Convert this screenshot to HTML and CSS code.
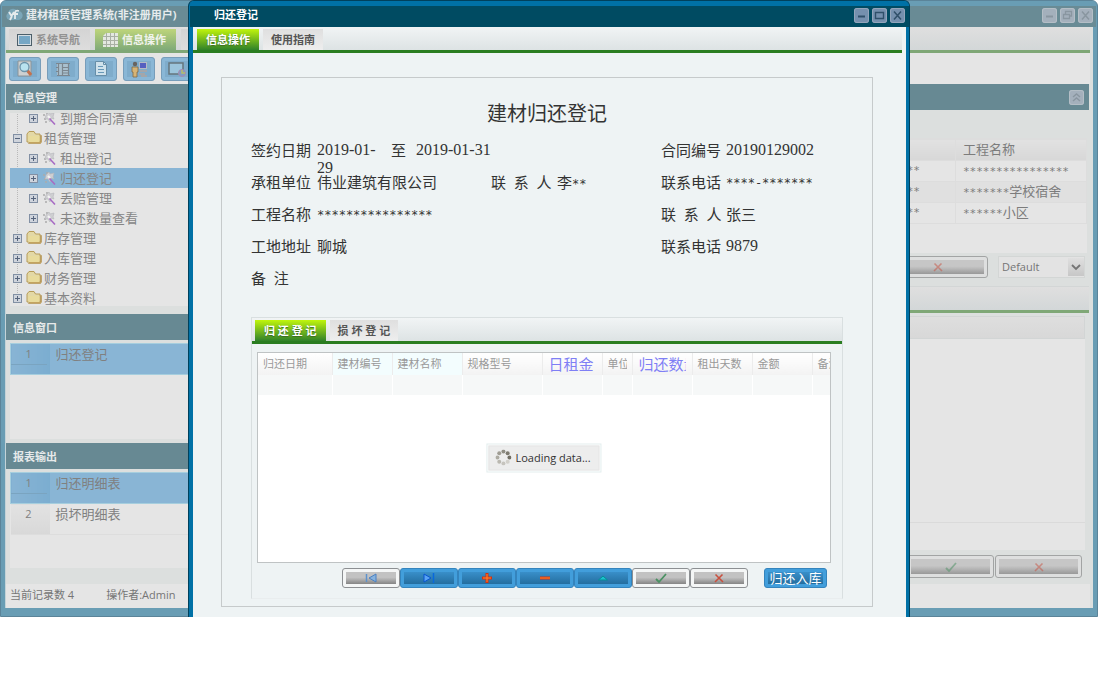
FILE: index.html
```html
<!DOCTYPE html>
<html lang="zh-CN">

<head>
    <meta charset="UTF-8">
    <meta name="viewport" content="width=device-width, initial-scale=1.0">
    <title>建材租赁管理系统</title>
    <link rel="stylesheet" href="styles.css">
</head>

<body>

    <!-- shared icons -->
    <svg class="defs" width="0" height="0" aria-hidden="true">
        <symbol id="i-min" viewBox="0 0 15 15"><path d="M4 8.5h7" stroke="currentColor" stroke-width="2" /></symbol>
        <symbol id="i-max" viewBox="0 0 15 15"><path d="M3.5 4.5h8v6h-8zM3 4.5h9" fill="none" stroke="currentColor" stroke-width="1.4" /></symbol>
        <symbol id="i-restore" viewBox="0 0 15 15"><path d="M5.500 6V3.500h6v4.500H9M3.500 6.500h6v4h-6z" fill="none" stroke="currentColor" stroke-width="1.3" /></symbol>
        <symbol id="i-close" viewBox="0 0 15 15"><path d="M4 3.500l7 8M11 3.500l-7 8" stroke="currentColor" stroke-width="1.5" /></symbol>
        <symbol id="i-up2" viewBox="0 0 15 15"><path d="M4 7l3.500-3L11 7M4 11l3.500-3 3.500 3" fill="none" stroke="currentColor" stroke-width="1.4" /></symbol>
        <symbol id="i-plusbox" viewBox="0 0 9 9"><rect x=".5" y=".5" width="8" height="8" fill="#cfd4dc" stroke="#8290a4" /><path d="M2 4.500h5M4.500 2v5" stroke="#56647c" /></symbol>
        <symbol id="i-minusbox" viewBox="0 0 9 9"><rect x=".5" y=".5" width="8" height="8" fill="#cfd4dc" stroke="#8290a4" /><path d="M2 4.500h5" stroke="#56647c" /></symbol>
        <symbol id="i-folder" viewBox="0 0 16 14"><path d="M1 11V3l2-2.500h5L9.500 3H14v8z" fill="#e3d8a6" stroke="#b79c58" /><path d="M2.500 12.500h12l1-1.500V4.500h-1V11h-11z" fill="#cdb06c" stroke="#ac8c48" stroke-width=".6" /><path d="M2.500 5h11v6h-11z" fill="#e8db9c" /></symbol>
        <symbol id="i-wand" viewBox="0 0 14 14"><path d="M1 4h2M2 8h2M4 2h2M3 11h2" stroke="#aaa" stroke-width="1.4" /><path d="M4 4l3-3 1 2 4-1-1 4 1 2-3-1-1 4-2-3-3 0z" fill="#cfcfd2" stroke="#b4b5b9" stroke-width=".6" /><path d="M6 5l2 2" stroke="#f3f3f3" stroke-width="2" /><path d="M7.500 7.500l5.500 6" stroke="#a86cc4" stroke-width="1.6" /></symbol>
        <symbol id="i-cross" viewBox="0 0 12 12"><path d="M2.500 2.500l7.500 7.500M9.500 2.500L2 10" stroke="#c8503f" stroke-width="1.600" /></symbol>
        <symbol id="i-check" viewBox="0 0 12 12"><path d="M1 7l3 3 7-8" fill="none" stroke="#4a9162" stroke-width="1.800" /></symbol>
    </svg>

    <div class="desktop">

        <div class="window main-window">
            <div class="titlebar">
                <svg class="logo" viewBox="0 0 18 14"><path d="M4 12a4 4 0 0 1-1-7 5 5 0 0 1 9-2 4.500 4.500 0 0 1 2 9z" fill="#7ba6b8" /><path d="M4 4l2.500 4L9 4M7 8l-2 4M14 3c-3-1-4 0-4 3v5M8 6h5" fill="none" stroke="#e4eaec" stroke-width="1.8" /></svg>
                <span class="title-text">建材租赁管理系统(非注册用户)</span>
                <div class="win-buttons">
                    <button type="button" aria-label="最小化"><svg><use href="#i-min" /></svg></button>
                    <button type="button" aria-label="还原"><svg><use href="#i-restore" /></svg></button>
                    <button type="button" aria-label="关闭"><svg><use href="#i-close" /></svg></button>
                </div>
            </div>

            <div class="window-body">
                <div class="tabs main-tabs">
                    <button type="button" class="tab">
                        <svg class="tab-icon" viewBox="0 0 15 12"><rect x=".5" y=".5" width="14" height="11" fill="#d5dde2" stroke="#4c5f6a" /><rect x="2" y="2" width="11" height="8" fill="#76a7c5" /></svg>系统导航</button>
                    <button type="button" class="tab active">
                        <svg class="tab-icon" viewBox="0 0 15 14"><path d="M3 0h12v14H0V3z" fill="#e4e8e0" /><path d="M3.500 0v14M7.500 0v14M11.500 0v14M0 3.500h15M0 7.500h15M0 11.500h15" stroke="#a9b0a4" /></svg>信息操作</button>
                    <button type="button" class="tab" aria-label="其他"></button>
                </div>

                <div class="toolbar">
                    <button type="button" aria-label="查询"><svg viewBox="0 0 18 18"><path d="M2 1h13v15H2z" fill="#cdd0d1" stroke="#8b9499" /><path d="M11 10l4 5" stroke="#c4704c" stroke-width="3" /><circle cx="8.500" cy="7" r="4.500" fill="#b9e2ef" stroke="#6d94aa" stroke-width="1.300" /></svg></button>
                    <button type="button" aria-label="列表"><svg viewBox="0 0 18 18"><path d="M3 4h12v11H3z" fill="#a9c0cf" /><path d="M2 3.500h14M3 15.500h13M4.500 4v11M8.500 4v11M14.500 4v11M8 7.500h6M8 10.500h6M8 13h6M2 7.500h3M2 11.500h3" stroke="#7b868f" stroke-width="1.200" /></svg></button>
                    <button type="button" aria-label="文档"><svg viewBox="0 0 18 18"><path d="M3.500 1.500h8l3 3v11h-11z" fill="#cfe2ec" stroke="#668ea8" /><path d="M6 6.500h5M6 9.500h6M6 12.500h6" stroke="#6798b8" /><path d="M11.500 1.500v3h3" fill="none" stroke="#668ea8" /></svg></button>
                    <button type="button" aria-label="用户"><svg viewBox="0 0 18 18"><circle cx="5" cy="4" r="2.200" fill="#686460" /><path d="M2 7h6v5H7v5H3v-5H2z" fill="#d6b476" stroke="#816a48" stroke-width=".8" /><rect x="9.500" y="2.500" width="7" height="6" fill="#555fc0" stroke="#b6bac4" /><path d="M10 11h7M9 14h6M11 16h6" stroke="#a3a6aa" stroke-width="2" /></svg></button>
                    <button type="button" aria-label="窗口"><svg viewBox="0 0 18 18"><rect x="1" y="3" width="14" height="11" fill="#9cc5dc" stroke="#66757e" stroke-width="1.500" /><circle cx="14" cy="13" r="3.500" fill="#7f9cc5" stroke="#a78aae" /><path d="M14 10v3h3" stroke="#b8bd68" stroke-width="1.500" fill="none" /></svg></button>
                </div>

                <div class="workspace">
                    <div class="sidebar">
                        <h2 class="heading">信息管理</h2>
                        <div class="tree">
                            <ul>
                                <li class="leaf"><svg class="box"><use href="#i-plusbox" /></svg><svg class="wand"><use href="#i-wand" /></svg>到期合同清单</li>
                                <li><svg class="box"><use href="#i-minusbox" /></svg><svg class="folder"><use href="#i-folder" /></svg>租赁管理</li>
                                <li class="leaf"><svg class="box"><use href="#i-plusbox" /></svg><svg class="wand"><use href="#i-wand" /></svg>租出登记</li>
                                <li class="leaf selected"><svg class="box"><use href="#i-plusbox" /></svg><svg class="wand"><use href="#i-wand" /></svg>归还登记</li>
                                <li class="leaf"><svg class="box"><use href="#i-plusbox" /></svg><svg class="wand"><use href="#i-wand" /></svg>丢赔管理</li>
                                <li class="leaf"><svg class="box"><use href="#i-plusbox" /></svg><svg class="wand"><use href="#i-wand" /></svg>未还数量查看</li>
                                <li><svg class="box"><use href="#i-plusbox" /></svg><svg class="folder"><use href="#i-folder" /></svg>库存管理</li>
                                <li><svg class="box"><use href="#i-plusbox" /></svg><svg class="folder"><use href="#i-folder" /></svg>入库管理</li>
                                <li><svg class="box"><use href="#i-plusbox" /></svg><svg class="folder"><use href="#i-folder" /></svg>财务管理</li>
                                <li><svg class="box"><use href="#i-plusbox" /></svg><svg class="folder"><use href="#i-folder" /></svg>基本资料</li>
                            </ul>
                        </div>

                        <h2 class="heading">信息窗口</h2>
                        <div class="list">
                            <table>
                                <tr class="selected"><td class="no"><span>1</span></td><td>归还登记</td></tr>
                            </table>
                        </div>

                        <h2 class="heading">报表输出</h2>
                        <div class="list">
                            <table>
                                <tr class="selected"><td class="no"><span>1</span></td><td>归还明细表</td></tr>
                                <tr><td class="no"><span>2</span></td><td>损坏明细表</td></tr>
                            </table>
                        </div>
                    </div>

                    <div class="content">
                        <div class="heading content-heading">
                            <button type="button" class="collapse" aria-label="折叠"><svg><use href="#i-up2" /></svg></button>
                        </div>
                        <div class="project-box">
                            <table class="projects">
                                <tr><th></th><th class="name">工程名称</th></tr>
                                <tr><td class="masked">**</td><td class="name"><span class="stars">****************</span></td></tr>
                                <tr><td class="masked">**</td><td class="name"><span class="stars">*******</span>学校宿舍</td></tr>
                                <tr><td class="masked">**</td><td class="name"><span class="stars">******</span>小区</td></tr>
                            </table>
                        </div>
                        <div class="filter-row">
                            <button type="button" class="nav-btn wide" aria-label="取消"><svg><use href="#i-cross" /></svg></button>
                            <div class="select-box">
                                <select aria-label="视图">
                                    <option>Default</option>
                                </select>
                                <svg viewBox="0 0 16 18"><path d="M4 7l4 4 4-4" fill="none" stroke="#747474" stroke-width="1.800" /></svg>
                            </div>
                        </div>
                        <div class="tabs sub-strip"></div>
                        <div class="detail-box">
                            <div class="detail-head"></div>
                            <div class="detail-foot"></div>
                        </div>
                        <div class="action-row">
                            <button type="button" class="nav-btn" aria-label="确定"><svg><use href="#i-check" /></svg></button>
                            <button type="button" class="nav-btn" aria-label="取消"><svg><use href="#i-cross" /></svg></button>
                        </div>
                    </div>
                </div>

                <div class="statusbar"><span>当前记录数 4</span><span>操作者:Admin</span></div>
            </div>
        </div>

        <!-- return registration dialog -->
        <div class="window dialog">
            <div class="titlebar">
                <span class="title-text">归还登记</span>
                <div class="win-buttons">
                    <button type="button" aria-label="最小化"><svg><use href="#i-min" /></svg></button>
                    <button type="button" aria-label="最大化"><svg><use href="#i-max" /></svg></button>
                    <button type="button" aria-label="关闭"><svg><use href="#i-close" /></svg></button>
                </div>
            </div>

            <div class="window-body">
                <div class="tabs">
                    <button type="button" class="tab active">信息操作</button>
                    <button type="button" class="tab">使用指南</button>
                </div>

                <div class="card">
                    <h1>建材归还登记</h1>
                    <dl class="info">
                        <dt>签约日期</dt>
                        <dd class="period"><span class="num start">2019-01-29</span><span class="to">至</span><span class="num">2019-01-31</span></dd>
                        <dt>合同编号</dt>
                        <dd class="num">20190129002</dd>

                        <dt>承租单位</dt>
                        <dd>伟业建筑有限公司</dd>
                        <dt>联&nbsp;&nbsp;系&nbsp;&nbsp;人</dt>
                        <dd>李<span class="stars">**</span></dd>
                        <dt>联系电话</dt>
                        <dd class="stars">****-*******</dd>

                        <dt>工程名称</dt>
                        <dd class="long stars">****************</dd>
                        <dt>联&nbsp;&nbsp;系&nbsp;&nbsp;人</dt>
                        <dd>张三</dd>

                        <dt>工地地址</dt>
                        <dd class="long">聊城</dd>
                        <dt>联系电话</dt>
                        <dd class="num">9879</dd>

                        <dt>备&nbsp;&nbsp;注</dt>
                        <dd class="full"></dd>
                    </dl>

                    <div class="panel">
                        <div class="tabs">
                            <button type="button" class="tab active">归 还 登 记</button>
                            <button type="button" class="tab">损 坏 登 记</button>
                        </div>
                        <div class="grid-box">
                            <table class="grid">
                                <colgroup>
                                    <col class="w74"><col class="w60"><col class="w70"><col class="w80"><col class="w60">
                                    <col class="w30"><col class="w60"><col class="w60"><col class="w60"><col class="w60">
                                </colgroup>
                                <tr>
                                    <th>归还日期</th>
                                    <th class="tint">建材编号</th>
                                    <th class="tint">建材名称</th>
                                    <th>规格型号</th>
                                    <th class="key"><div>日租金</div></th>
                                    <th><div>单位</div></th>
                                    <th class="key"><div>归还数量</div></th>
                                    <th>租出天数</th>
                                    <th>金额</th>
                                    <th>备注</th>
                                </tr>
                                <tr>
                                    <td></td><td></td><td></td><td></td><td></td>
                                    <td></td><td></td><td></td><td></td><td></td>
                                </tr>
                            </table>
                            <div class="loading">
                                <div class="loading-inner">
                                    <svg viewBox="0 0 16 16">
                                        <circle cx="8" cy="2" r="2" fill="#8f8d84" /><circle cx="12.200" cy="3.800" r="2" fill="#7d7a70" />
                                        <circle cx="14" cy="8" r="2" fill="#716e64" /><circle cx="12.200" cy="12.200" r="2" fill="#d2d0ca" />
                                        <circle cx="8" cy="14" r="2" fill="#c6c4be" /><circle cx="3.800" cy="12.200" r="2" fill="#bab8b0" />
                                        <circle cx="2" cy="8" r="2" fill="#adaba2" /><circle cx="3.800" cy="3.800" r="2" fill="#9f9c93" />
                                    </svg>Loading data...
                                </div>
                            </div>
                        </div>
                        <div class="nav-row">
                            <button type="button" class="nav-btn" aria-label="首条"><svg viewBox="0 0 12 12"><path d="M1.500 2v8" stroke="#5d92cc" stroke-width="1.500" /><path d="M11 2v8L4 6z" fill="#86b2de" stroke="#4a80c2" /></svg></button>
                            <button type="button" class="nav-btn blue" aria-label="末条"><svg viewBox="0 0 12 12"><path d="M10.500 1v10" stroke="#0869dd" stroke-width="1.500" /><path d="M1 2v8l7-4z" fill="#58a3f5" stroke="#0754d0" /></svg></button>
                            <button type="button" class="nav-btn blue" aria-label="新增"><svg viewBox="0 0 12 12"><path d="M6 1v10M1 6h10" stroke="#d8300c" stroke-width="3" /><path d="M6 2v8M2 6h8" stroke="#ff8a30" stroke-width="1" /></svg></button>
                            <button type="button" class="nav-btn blue" aria-label="删除"><svg viewBox="0 0 12 12"><path d="M1 6h10" stroke="#d8300c" stroke-width="3" /><path d="M1 6h10" stroke="#ff8a30" stroke-width="1" /></svg></button>
                            <button type="button" class="nav-btn blue" aria-label="编辑"><svg viewBox="0 0 12 12"><path d="M1.500 8h9L6 4z" fill="#1bc1cc" stroke="#078a95" /></svg></button>
                            <button type="button" class="nav-btn" aria-label="确定"><svg><use href="#i-check" /></svg></button>
                            <button type="button" class="nav-btn" aria-label="取消"><svg><use href="#i-cross" /></svg></button>
                            <button type="button" class="nav-btn blue store">归还入库</button>
                        </div>
                    </div>
                </div>
            </div>
        </div>

    </div>

</body>

</html>
```
FILE: styles.css
```css
* {
    box-sizing: border-box;
    margin: 0;
    padding: 0;
}

body {
    background-color: #fff;
    font-family: "Open Sans", "Noto Sans CJK SC", sans-serif;
    font-size: 11px;
    line-height: 16px;
}

button {
    font: inherit;
    border: none;
    cursor: pointer;
}

table {
    border-collapse: collapse;
    table-layout: fixed;
    width: 100%;
}

ul {
    list-style: none;
}

.defs {
    position: absolute;
}

.desktop {
    position: relative;
}

/* windows */
.window {
    overflow: hidden;
    border-radius: 6px 6px 0 0;
}

.main-window {
    padding: 0 4px 4px;
    background-color: #699db4;
    border: 1px solid #5b8499;
}

.dialog {
    position: absolute;
    top: 0;
    left: 188px;
    right: 188px;
    padding: 0 3px 0 4px;
    background-color: #0071a6;
    border: 1px solid #00415c;
    border-bottom: none;
}

.titlebar {
    display: flex;
    align-items: center;
    height: 26px;
    padding: 2px 4px 0;
    margin: 0 -3px;
    color: #fff;
    font-weight: bold;
    background: linear-gradient(#0071a6 5px, #004b62 5px);
}

.main-window .titlebar {
    padding: 2px 3px 0;
    color: #e6ebed;
    background: linear-gradient(#699db4 5px, #698b95 5px);
}

.dialog .title-text {
    margin-left: 20px;
}

.logo {
    width: 18px;
    height: 14px;
    margin-right: 3px;
}

.win-buttons {
    display: flex;
    gap: 3px;
    margin-left: auto;
}

.win-buttons button,
.collapse {
    width: 15px;
    height: 15px;
    border-radius: 3px;
    color: #30506a;
    background-color: #7590ae;
    box-shadow: inset 0 0 0 1px #93a5bb;
}

.main-window .win-buttons button,
.collapse {
    color: #8996a0;
    background-color: #a4b0bc;
    box-shadow: inset 0 0 0 1px #b4bec6;
}

.win-buttons svg,
.collapse svg {
    display: block;
    width: 15px;
    height: 15px;
}

.window-body {
    background-color: #eef3f4;
}

.main-window .window-body {
    background-color: #dcdfde;
    border-left: 1px solid #c3d3d8;
    padding-right: 3px;
}

/* tabs */
.tabs {
    display: flex;
    align-items: flex-end;
    gap: 4px;
    height: 26px;
    padding: 0 4px;
    background: linear-gradient(#f1f4f5, #dde3e4);
    border-bottom: 3px solid #2a7d20;
}

.tab {
    height: 21px;
    padding: 1px 8px 0;
    color: #555;
    font-weight: bold;
    background: linear-gradient(#dfdfdf, #eeeeee);
}

.tab.active {
    padding: 1px 9px 0;
    color: #fff;
    background: linear-gradient(#c0f50d, #2f8129);
    text-shadow: 0 1px 1px #3a6b20;
}

.dialog .window-body > .tabs {
    margin-right: 4px;
}

.main-window .tabs {
    gap: 5px;
    padding: 0 3px;
    background: linear-gradient(#dfdfdf, #d3d7d8);
    border-bottom-color: #7fa776;
}

.main-window .tab {
    display: flex;
    align-items: center;
    gap: 4px;
    min-width: 81px;
    color: #929292;
    background: linear-gradient(#d4d4d4, #dddddd);
}

.main-window .tab.active {
    padding: 1px 8px 0;
    color: #f0f3ec;
    background: linear-gradient(#bed57b, #7faa78);
    text-shadow: none;
}

.tab-icon {
    width: 15px;
    height: 14px;
}

.toolbar {
    display: flex;
    gap: 6px;
    height: 31px;
    padding: 4px 3px 3px;
    background-color: #e5e5e5;
}

.toolbar button {
    width: 32px;
    height: 24px;
    border: 1px solid #779dba;
    border-radius: 3px;
    background-color: #7faccb;
    box-shadow: inset 0 0 0 3px #8ab7d6;
}

.toolbar svg {
    display: block;
    width: 18px;
    height: 18px;
    margin: 0 auto;
}

/* main window panes */
.workspace {
    display: grid;
    grid-template-columns: 240px 1fr;
}

.heading {
    height: 26px;
    padding: 0 7px;
    color: #e6e9ea;
    font-size: 11px;
    line-height: 28px;
    background-color: #678993;
}

.tree {
    height: 193px;
    margin: 3px 0 8px 4px;
    overflow: hidden;
    background-color: #e5e5e5;
}

.tree ul {
    margin-top: -5px;
    background: repeating-linear-gradient(#b9b9b9 0 1px, transparent 1px 2px) 7px 0 / 1px 190px no-repeat;
}

.tree li {
    display: flex;
    align-items: center;
    height: 20px;
    padding-left: 3px;
    color: #858585;
    font-size: 13px;
    line-height: 18px;
}

.tree .leaf {
    padding-left: 19px;
}

.tree .selected {
    background-color: #89b5d5;
}

.box {
    width: 9px;
    height: 9px;
    margin-right: 4px;
}

.folder {
    width: 16px;
    height: 14px;
    margin-right: 2px;
}

.wand {
    width: 14px;
    height: 14px;
    margin-right: 4px;
}

.list {
    height: 96px;
    margin: 3px 0 4px 4px;
    background-color: #e5e5e5;
}

.list tr {
    height: 31px;
    border-bottom: 1px solid #dddddd;
}

.list td {
    padding-left: 6px;
    color: #808080;
    font-size: 13px;
    line-height: 20px;
    vertical-align: top;
}

.list .no {
    width: 39px;
    padding: 0 3px 0 0;
    font-size: 11px;
    text-align: center;
    background: linear-gradient(#e2e2e2, #d8d8d8);
}

.list .selected {
    background-color: #89b5d5;
    border: 1px solid #a6cede;
}

.list .selected .no {
    background: linear-gradient(to right, #88b4d4, #7badd0);
}

.no span {
    display: block;
}

.selected .no span {
    border-bottom: 1px solid #7aa4c0;
}

.statusbar {
    display: flex;
    gap: 32px;
    height: 24px;
    margin-bottom: 4px;
    padding: 3px 4px;
    color: #757575;
    background-color: #e5e5e5;
}

.content {
    display: flex;
    flex-direction: column;
    padding-right: 1px;
}

.content-heading {
    display: flex;
    align-items: center;
    justify-content: flex-end;
    padding: 0 5px;
}

.project-box {
    height: 115px;
    margin: 28px 2px 3px 0;
    background-color: #e5e5e5;
}

.projects th,
.projects td {
    height: 21px;
    color: #7c7c7c;
    font-size: 13px;
    font-weight: normal;
    line-height: 18px;
    text-align: left;
    border: 1px solid #dddddd;
}

.projects th {
    height: 22px;
    padding-bottom: 2px;
    background: linear-gradient(#e2e2e2, #d7d7d7);
}

.projects .name {
    width: 131px;
    padding-left: 7px;
}

.projects tr:nth-child(odd) td {
    background-color: #e0e0e0;
}

.stars,
.projects .masked {
    font-family: "DejaVu Sans Mono", monospace;
    font-size: 12px;
}

.projects .stars,
.projects .masked {
    font-size: 11px;
}

.projects .masked {
    padding-right: 35px;
    text-align: right;
}

.filter-row,
.action-row {
    display: flex;
    justify-content: flex-end;
    height: 22px;
}

.filter-row {
    gap: 10px;
    padding-right: 4px;
    margin-bottom: 8px;
}

.select-box {
    position: relative;
    width: 87px;
    background-color: #e3e3e3;
    border: 1px solid #d3d6d5;
}

.select-box select {
    width: 100%;
    height: 20px;
    padding-left: 3px;
    appearance: none;
    font: inherit;
    color: #757575;
    background: none;
    border: none;
}

.select-box svg {
    position: absolute;
    top: 1px;
    right: 0;
    width: 16px;
    height: 18px;
    background: linear-gradient(#dfdfdf, #c7c7c7);
    pointer-events: none;
}

.main-window .sub-strip {
    height: 27px;
    border-top: 1px solid #d3d6d6;
}

.detail-box {
    display: flex;
    flex-direction: column;
    justify-content: space-between;
    height: 234px;
    margin: 3px 4px 5px 0;
    background-color: #e5e5e5;
}

.detail-head {
    height: 23px;
    background: linear-gradient(#dedede, #d8d8d8);
    border: 1px solid #d2d5d5;
}

.detail-foot {
    height: 28px;
    border-top: 1px solid #dadada;
}

.action-row {
    gap: 1px;
    height: 23px;
    padding-right: 7px;
    margin-bottom: 6px;
}

/* two-tone buttons under the grids */
.nav-btn {
    display: flex;
    align-items: center;
    justify-content: center;
    width: 58px;
    height: 20px;
    padding: 3px;
    border: 1px solid #8c8f92;
    border-radius: 3px;
    background: linear-gradient(#c2c2c2 45%, #858585) content-box, #f4f6f6;
}

.nav-btn svg {
    width: 12px;
    height: 12px;
}

.nav-btn.blue {
    color: #fff;
    border-color: #3484bd;
    background: linear-gradient(#398fc9, #246e9f) content-box, #429edb;
}

.main-window .nav-btn {
    width: 87px;
    height: auto;
    border-color: #a2a4a4;
    background: linear-gradient(#c6c6c6 45%, #999999) content-box, #dedfdf;
}

.main-window .nav-btn.wide {
    width: 100px;
}

.main-window .nav-btn svg {
    opacity: .5;
}

/* dialog form */
.card {
    margin: 24px 33px 0 28px;
    padding: 22px 29px 7px;
    border: 1px solid #c6cacb;
}

.dialog .window-body {
    padding-bottom: 10px;
    border-bottom: 1px solid #dde3e5;
}

.card h1 {
    color: #333;
    font-size: 20px;
    font-weight: normal;
    line-height: 28px;
    text-align: center;
}

.info {
    display: grid;
    grid-template-columns: 66px 174px 66px 104px 65px 1fr;
    grid-auto-rows: 32px;
    margin: 13px 0 16px;
    color: #333;
    font-size: 15px;
    line-height: 18px;
}

.info .period {
    grid-column: span 3;
    display: flex;
}

.info .long {
    grid-column: span 3;
}

.info .full {
    grid-column: span 5;
}

.info dd.stars {
    line-height: 20px;
}

.num {
    font-family: "Liberation Serif", serif;
    font-size: 16px;
}

.start {
    width: 62px;
    margin-right: 12px;
}

.to {
    width: 25px;
}

.panel {
    padding-bottom: 10px;
    border: 1px solid #d9dfe0;
    border-bottom-color: #e9edee;
}

.panel .tabs {
    padding: 0 3px;
}

.grid-box {
    position: relative;
    height: 211px;
    margin: 8px 11px 5px 5px;
    overflow: hidden;
    background-color: #fff;
    border: 1px solid #bfc3c4;
}

.grid {
    width: 614px;
}

.w30 { width: 30px; }
.w60 { width: 60px; }
.w70 { width: 70px; }
.w74 { width: 74px; }
.w80 { width: 80px; }

.grid th {
    height: 22px;
    padding: 0 5px;
    color: #999;
    font-weight: normal;
    text-align: left;
    white-space: nowrap;
    background: linear-gradient(#ffffff, #f3f3f3);
    border-right: 1px solid #ececec;
}

.grid th.tint {
    background: #f3fdfe;
}

.grid th.key {
    padding: 0 6px;
    color: #7f7ff5;
    font-size: 15px;
}

.grid th div {
    overflow: hidden;
}

.grid td {
    height: 20px;
    background-color: #f6f8f8;
    border-right: 1px solid #fff;
}

.loading {
    position: absolute;
    top: 50%;
    left: 50%;
    transform: translate(-50%, -50%);
    padding: 1px;
    background-color: #fff;
    border: 1px solid #e3eeee;
}

.loading-inner {
    display: flex;
    align-items: center;
    gap: 4px;
    height: 25px;
    padding: 0 8px 0 6px;
    color: #333;
    white-space: nowrap;
    background-color: #ededed;
    border: 1px solid #e5e5e5;
}

.loading svg {
    width: 16px;
    height: 16px;
}

.nav-row {
    display: flex;
    justify-content: flex-end;
    padding-right: 15px;
}

.nav-row .store {
    width: 63px;
    margin-left: 16px;
    font-size: 13px;
    line-height: 12px;
    white-space: nowrap;
}
```
